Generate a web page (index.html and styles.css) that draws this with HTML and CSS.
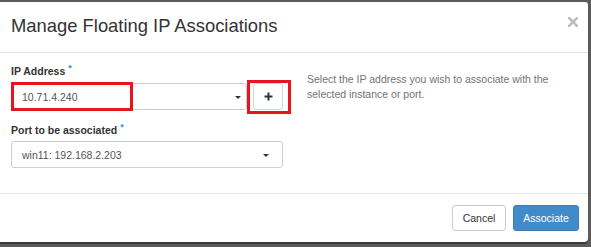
FILE: index.html
```html
<!DOCTYPE html>
<html lang="en">
<head>
<meta charset="utf-8">
<title>Manage Floating IP Associations</title>
<link rel="stylesheet" href="styles.css">
</head>
<body>
<div class="modal">
  <div class="modal-header">
    <h4 class="modal-title">Manage Floating IP Associations</h4>
    <svg class="close" width="10" height="10" viewBox="0 0 10 10" aria-label="Close">
      <path d="M1 1 L9 9 M9 1 L1 9" stroke="#bdbdbd" stroke-width="2.6" stroke-linecap="square" fill="none"/>
    </svg>
  </div>
  <div class="modal-body">
    <div class="form-col">
      <div class="form-group">
        <label class="label">IP Address<span class="req">*</span></label>
        <div class="input-row">
          <div class="select select-grow">
            <span>10.71.4.240</span>
            <span class="caret"></span>
          </div>
          <div class="btn-add">
            <svg width="9" height="9" viewBox="0 0 9 9"><path d="M4.5 0.5 V8.5 M0.5 4.5 H8.5" stroke="#333" stroke-width="2" fill="none"/></svg>
          </div>
          <div class="mark mark-select"></div>
          <div class="mark mark-button"></div>
        </div>
      </div>
      <div class="form-group second">
        <label class="label">Port to be associated<span class="req">*</span></label>
        <div class="select select-wide">
          <span>win11: 192.168.2.203</span>
          <span class="caret"></span>
        </div>
      </div>
    </div>
    <div class="help">
      <p>Select the IP address you wish to associate with the selected instance or port.</p>
    </div>
  </div>
  <div class="modal-footer">
    <button class="btn btn-default">Cancel</button>
    <button class="btn btn-primary">Associate</button>
  </div>
</div>
</body>
</html>
```
FILE: styles.css
```css
html, body {
  margin: 0;
  padding: 0;
}
body {
  background: #5b5b5b;
  font-family: "Liberation Sans", Arial, Helvetica, sans-serif;
  height: 247px;
  overflow: hidden;
}
.modal {
  width: 588px;
  height: 240px;
  margin-top: 2px;
  background: #fff;
  display: flex;
  flex-direction: column;
  border-radius: 0 3px 4px 0;
  box-shadow: 0 2px 0 rgba(0,0,0,0.35);
}
.modal-header {
  box-sizing: border-box;
  height: 51px;
  padding: 14px 10px 0 11px;
  border-bottom: 1px solid #e5e5e5;
  display: flex;
  justify-content: space-between;
  align-items: flex-start;
}
.modal-title {
  margin: 0;
  font-size: 18.4px;
  line-height: 20px;
  font-weight: normal;
  color: #333;
}
.close {
  display: block;
  margin-top: 1px;
}
.modal-body {
  flex: 1;
  box-sizing: border-box;
  padding: 11px 0 0 11px;
  display: flex;
  gap: 24px;
}
.form-col {
  width: 272px;
  display: flex;
  flex-direction: column;
}
.form-group {
  display: flex;
  flex-direction: column;
}
.form-group.second {
  margin-top: 13px;
}
.label {
  display: block;
  height: 15px;
  font-size: 10.5px;
  line-height: 15px;
  font-weight: bold;
  color: #333;
  margin-bottom: 4px;
}
.second .label {
  margin-bottom: 3px;
}
.req {
  position: relative;
  top: -4px;
  color: #3b8fd6;
  font-size: 9px;
  line-height: 0;
  margin-left: 3px;
  font-weight: bold;
}
.input-row {
  position: relative;
  display: flex;
  gap: 6px;
}
.select {
  box-sizing: border-box;
  height: 27px;
  border: 1px solid #cfcfcf;
  border-radius: 3px;
  display: flex;
  align-items: center;
  justify-content: space-between;
  padding: 0 5px 0 10px;
  font-size: 10.5px;
  color: #555;
  background: #fff;
}
.select-grow {
  flex: 1;
}
.select-wide {
  width: 272px;
  padding-right: 13px;
}
.caret {
  width: 0;
  height: 0;
  border-top: 3px solid #333;
  border-left: 3px solid transparent;
  border-right: 3px solid transparent;
  margin-top: 1px;
}
.btn-add {
  box-sizing: border-box;
  width: 30px;
  height: 27px;
  border: 1px solid #d5d5d5;
  border-radius: 3px;
  display: flex;
  align-items: center;
  justify-content: center;
  background: #fff;
}
.btn-add svg {
  display: block;
}
.mark {
  position: absolute;
  box-sizing: border-box;
  border: 3px solid #e8141f;
}
.mark-select {
  left: 0;
  top: -1px;
  width: 122px;
  height: 29px;
}
.mark-button {
  left: 236px;
  top: -3px;
  width: 44px;
  height: 34px;
}
.help {
  padding-top: 8px;
  width: 260px;
}
.help p {
  margin: 0;
  font-size: 10.5px;
  line-height: 15px;
  color: #737373;
}
.modal-footer {
  border-top: 1px solid #e5e5e5;
  padding: 11px 9px 11px 0;
  display: flex;
  justify-content: flex-end;
  gap: 7px;
}
.btn {
  box-sizing: border-box;
  height: 26px;
  border-radius: 3px;
  font-family: inherit;
  font-size: 10.5px;
  padding: 0;
  margin: 0;
  cursor: pointer;
}
.btn-default {
  width: 54px;
  background: #fff;
  border: 1px solid #ccc;
  color: #333;
}
.btn-primary {
  width: 66px;
  background: #428bca;
  border: 1px solid #3a80bd;
  color: #fff;
}
```
